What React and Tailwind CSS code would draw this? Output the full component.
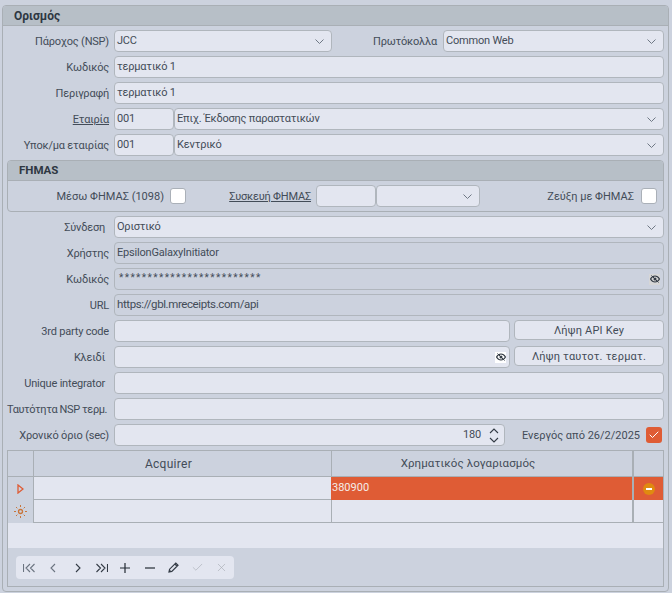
import React from "react";
import { Check, X } from "lucide-react";

const Chevron = () => (
  <svg width="9" height="5" viewBox="0 0 9 5" className="shrink-0">
    <path d="M.5 .5l4 4 4-4" fill="none" stroke="#6f7885" strokeWidth="1" />
  </svg>
);

const EyeOff = ({ bg }) => (
  <span className={`flex h-[11px] w-[11px] shrink-0 items-center justify-center ${bg}`}>
    <svg width="10" height="8" viewBox="0 0 10 8">
      <path d="M0.5 4C2 1.500 3.500 1 5 1s3 .5 4.500 3C8 6.500 6.500 7 5 7S2 6.500 .5 4z" fill="none" stroke="#333b45" strokeWidth="1.200" />
      <circle cx="5" cy="4" r="1.500" fill="#333b45" />
      <path d="M1.500 .5l7 7" stroke="#333b45" strokeWidth="1" />
    </svg>
  </span>
);

const Label = ({ children, className = "pr-[5px]" }) => (
  <div className={`w-[111px] shrink-0 text-right leading-none ${className}`}>{children}</div>
);

const Field = ({ children, className = "", disabled }) => (
  <div
    className={`flex h-[22px] min-w-0 items-center justify-between rounded-[4px] border border-[#b0b6bd] pl-[2px] pr-[7px] ${
      disabled ? "bg-[#ccd2de]" : "bg-[#e3e6f0]"
    } ${className}`}
  >
    {children}
  </div>
);

const Row = ({ label, labelClass, children, className = "mt-[4px]" }) => (
  <div className={`flex h-[22px] items-center pr-[4px] ${className}`}>
    <Label className={labelClass}>{label}</Label>
    {children}
  </div>
);

const Box = ({ className = "" }) => (
  <span className={`h-[16px] w-[16px] shrink-0 rounded-[3px] border border-[#aab0b8] bg-white ${className}`} />
);

const Button = ({ children, className = "" }) => (
  <button className={`ml-[4px] h-[20px] w-[150px] shrink-0 self-start rounded-[4px] border border-[#b0b6bd] bg-[#e3e6f0] leading-none tracking-[0.2px] ${className}`}>
    {children}
  </button>
);

const Tool = ({ children }) => <span className="flex h-[23px] w-[24.4px] items-center justify-center">{children}</span>;

const Nav = ({ d, w = 12, color }) => (
  <svg width={w} height="10" viewBox={`0 0 ${w} 10`}>
    <path d={d} fill="none" stroke={color} strokeWidth="1.100" />
  </svg>
);

export default function App() {
  return (
    <div className="h-[593px] w-[672px] overflow-hidden bg-[#ccd2de] px-[2px] pt-[5px] text-[11px] tracking-[-0.2px] text-[#434c58] [font-family:Roboto,sans-serif]">
      <div className="h-[587px] w-[667px] rounded-[4px] border border-[#a9afb5]">
        <div className="flex h-[20px] items-center rounded-t-[3px] border-b border-[#a9afb5] bg-[#b7bfc7] pl-[11px] text-[12px] font-bold tracking-normal text-[#2e3742]">Ορισμός</div>

        <Row label="Πάροχος (NSP)">
          <Field className="w-[218px]">JCC<Chevron /></Field>
          <div className="flex-1 pr-[6px] text-right leading-none">Πρωτόκολλα</div>
          <Field className="w-[221px]">Common Web<Chevron /></Field>
        </Row>
        <Row label="Κωδικός"><Field className="flex-1">τερματικό 1</Field></Row>
        <Row label="Περιγραφή"><Field className="flex-1">τερματικό 1</Field></Row>
        <Row label={<span className="underline">Εταιρία</span>}>
          <Field className="w-[60px]">001</Field>
          <Field className="flex-1">Επιχ. Έκδοσης παραστατικών<Chevron /></Field>
        </Row>
        <Row label="Υποκ/μα εταιρίας">
          <Field className="w-[60px]">001</Field>
          <Field className="flex-1">Κεντρικό<Chevron /></Field>
        </Row>

        <div className="mx-[4px] mt-[4px] h-[52px] rounded-[4px] border border-[#a9afb5]">
          <div className="flex h-[20px] items-center rounded-t-[3px] border-b border-[#a9afb5] bg-[#b7bfc7] pl-[11px] text-[11.5px] font-bold tracking-normal text-[#2e3742]">FHMAS</div>
          <div className="flex h-[30px] items-center">
            <span className="w-[156px] text-right leading-none tracking-normal">Μέσω ΦΗΜΑΣ (1098)</span>
            <Box className="ml-[6px]" />
            <span className="w-[125px] text-right leading-none underline">Συσκευή ΦΗΜΑΣ</span>
            <Field className="ml-[5px] w-[60px]" />
            <Field className="w-[104px]"><span /><Chevron /></Field>
            <span className="ml-auto leading-none tracking-normal">Ζεύξη με ΦΗΜΑΣ</span>
            <Box className="ml-[7px] mr-[6px]" />
          </div>
        </div>

        <Row label="Σύνδεση" labelClass="pr-[9px]">
          <Field className="flex-1">Οριστικό<Chevron /></Field>
        </Row>
        <Row label="Χρήστης"><Field className="flex-1" disabled>EpsilonGalaxyInitiator</Field></Row>
        <Row label="Κωδικός">
          <Field className="flex-1 !pr-[3px]" disabled>
            <span className="-mt-[2px] pl-[2px] text-[10px] leading-none tracking-[1.4px]">*************************</span>
            <EyeOff bg="bg-[#d6d6d6]" />
          </Field>
        </Row>
        <Row label="URL">
          <Field className="flex-1" disabled><span className="text-[11.5px] tracking-[-0.4px]">https://gbl.mreceipts.com/api</span></Field>
        </Row>
        <Row label="3rd party code">
          <Field className="flex-1" />
          <Button>Λήψη API Key</Button>
        </Row>
        <Row label="Κλειδί" labelClass="pr-[9px]">
          <Field className="flex-1 !pr-[3px]"><span /><EyeOff bg="bg-white" /></Field>
          <Button>Λήψη ταυτοτ. τερματ.</Button>
        </Row>
        <Row label="Unique integrator" labelClass="pr-[9px]"><Field className="flex-1" /></Row>
        <Row label="Ταυτότητα NSP τερμ." labelClass="pl-[4px] pr-[7px] whitespace-nowrap tracking-[-0.4px]"><Field className="flex-1" /></Row>
        <Row label="Χρονικό όριο (sec)">
          <Field className="w-[391px] !pr-[5px]">
            <span />
            <span className="flex items-center gap-[8px]">
              180
              <svg width="10" height="15" viewBox="0 0 10 15">
                <path d="M1 5l4-4 4 4M1 10l4 4 4-4" fill="none" stroke="#333b45" strokeWidth="1.100" />
              </svg>
            </span>
          </Field>
          <span className="ml-auto leading-none tracking-normal">Ενεργός από 26/2/2025</span>
          <span className="ml-[6px] mr-[2px] flex h-[16px] w-[16px] shrink-0 items-center justify-center rounded-[3px] bg-[#df5c35]">
            <Check size={12} strokeWidth={2} className="text-white" />
          </span>
        </Row>

        <div className="mx-[4px] mt-[4px] flex h-[137px] flex-col border border-[#a9afb5]">
          <div className="grid h-[26px] grid-cols-[25px_298px_301px_1fr] border-b border-[#a9afb5]">
            <span />
            <span className="flex items-center justify-center border-l border-[#a9afb5] pr-[28px] text-[12px] tracking-[0.3px]">Acquirer</span>
            <span className="flex items-center justify-center border-l border-[#a9afb5] pr-[28px] text-[11.5px] tracking-[0.1px]">Χρηματικός λογαριασμός</span>
            <span className="border-l-2 border-[#a9afb5]" />
          </div>
          <div className="h-[71px] bg-[#e3e6f0]">
            <div className="grid h-[23px] grid-cols-[25px_298px_301px_1fr]">
              <span className="flex items-center justify-center bg-[#ccd2de]">
                <svg width="7" height="10" viewBox="0 0 7 10"><path d="M1 1v8l5-4z" fill="none" stroke="#df5c35" strokeWidth="1.300" /></svg>
              </span>
              <span className="border-b border-l border-[#a9afb5]" />
              <span className="flex items-center bg-[#df5c35] pl-[1px] tracking-normal text-[#f4ece8]">380900</span>
              <span className="flex items-center justify-center border-l-2 border-[#a9afb5] bg-[#df5c35]">
                <span className="flex h-[12px] w-[12px] items-center justify-center rounded-full bg-[#e08a10]">
                  <span className="h-[2px] w-[6px] bg-white" />
                </span>
              </span>
            </div>
            <div className="grid h-[23px] grid-cols-[25px_298px_301px_1fr]">
              <span className="flex items-center justify-center bg-[#ccd2de]">
                <svg width="13" height="13" viewBox="0 0 13 13" fill="none" stroke="#c8763c" strokeWidth="1">
                  <circle cx="6.500" cy="6.500" r="2" strokeWidth="1.300" />
                  <path d="M6.500 0v2M6.500 11v2M0 6.500h2M11 6.500h2M2 2l1.300 1.300M9.700 9.700L11 11M2 11l1.300-1.300M9.700 3.300L11 2" />
                </svg>
              </span>
              <span className="border-b border-l border-[#a9afb5]" />
              <span className="border-b border-l border-[#a9afb5]" />
              <span className="border-b border-l-2 border-[#a9afb5]" />
            </div>
          </div>
          <div className="flex-1 pl-[8px] pt-[8px]">
            <div className="flex h-[23px] w-[218px] items-center rounded-[4px] bg-[#e3e6f0] pl-[1px]">
              <Tool><Nav color="#6b7480" d="M.5 1v8M7 1L3 5l4 4M11.500 1l-4 4 4 4" /></Tool>
              <Tool><Nav w={6} color="#6b7480" d="M5 1L1 5l4 4" /></Tool>
              <Tool><span className="pl-[1px]"><Nav w={6} color="#333b45" d="M1 1l4 4-4 4" /></span></Tool>
              <Tool><span className="pl-[2px]"><Nav color="#333b45" d="M.5 1l4 4-4 4M5 1l4 4-4 4M11.500 1v8" /></span></Tool>
              <Tool>
                <svg width="10" height="10" viewBox="0 0 10 10"><path d="M5 0v10M0 5h10" stroke="#222a33" strokeWidth="1.200" /></svg>
              </Tool>
              <Tool>
                <svg width="10" height="10" viewBox="0 0 10 10"><path d="M0 5h10" stroke="#222a33" strokeWidth="1.200" /></svg>
              </Tool>
              <Tool>
                <svg width="11" height="11" viewBox="0 0 11 11" fill="none" stroke="#333b45" strokeWidth="1.200">
                  <path d="M1 10l.6-2.800L7.800 1l2.200 2.200-6.200 6.200zM6.800 2l2.200 2.200" />
                  <path d="M1.500 9.500l1-1" strokeWidth="1.500" />
                </svg>
              </Tool>
              <Tool><Check size={13} strokeWidth={1.200} className="text-[#a8adb5]" /></Tool>
              <Tool><X size={13} strokeWidth={1.200} className="text-[#a8adb5]" /></Tool>
            </div>
          </div>
        </div>
      </div>
    </div>
  );
}
